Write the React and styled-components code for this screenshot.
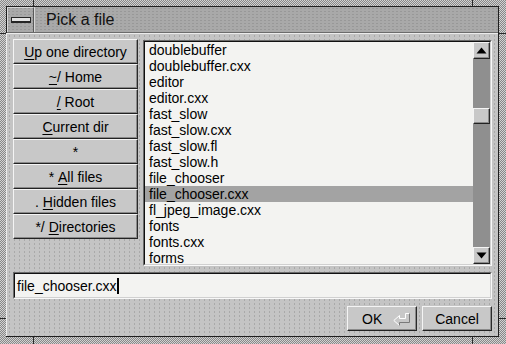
import React from "react";
import styled, { createGlobalStyle } from "styled-components";

const Global = createGlobalStyle`
  html, body { margin: 0; padding: 0; background: #b0b0b0; }
  body { font-family: "Liberation Sans", Arial, Helvetica, sans-serif; }
  #root { width: 506px; height: 344px; }
`;

const dots = `radial-gradient(circle, rgba(120,120,120,0.35) 0.5px, transparent 0.9px)`;

const Frame = styled.div`
  width: 506px;
  height: 344px;
  box-sizing: border-box;
  padding: 6px 7px 7px 6px;
  background:
    linear-gradient(#2a2a2a, #2a2a2a) 33px 0 / 1px 6px no-repeat,
    linear-gradient(#2a2a2a, #2a2a2a) 33px 337px / 1px 7px no-repeat,
    linear-gradient(#2a2a2a, #2a2a2a) 472px 0 / 1px 6px no-repeat,
    linear-gradient(#2a2a2a, #2a2a2a) 472px 337px / 1px 7px no-repeat,
    linear-gradient(#2a2a2a, #2a2a2a) 0 33px / 6px 1px no-repeat,
    linear-gradient(#2a2a2a, #2a2a2a) 499px 33px / 7px 1px no-repeat,
    linear-gradient(#2a2a2a, #2a2a2a) 0 318px / 6px 1px no-repeat,
    linear-gradient(#2a2a2a, #2a2a2a) 499px 318px / 7px 1px no-repeat,
    repeating-conic-gradient(#888888 0% 25%, #d2d2d2 0% 50%) 0 0 / 2px 2px;
`;

const Win = styled.div`
  height: 100%;
  box-sizing: border-box;
  border: 1px solid #1e1e1e;
  display: flex;
  flex-direction: column;
  background-color: #c4c4c4;
`;

const TitleBar = styled.div`
  height: 26px;
  flex: none;
  box-sizing: border-box;
  display: flex;
  align-items: stretch;
  background-color: #a9a9a9;
  background-image: ${dots};
  background-size: 4px 3px;
  border-bottom: 1px solid #6c6c6c;
`;

const MenuBox = styled.div`
  width: 27px;
  box-sizing: border-box;
  display: flex;
  align-items: center;
  justify-content: center;
  border-top: 1px solid #d8d8d8;
  border-left: 1px solid #d8d8d8;
  border-right: 1px solid #5a5a5a;
  box-shadow: 1px 0 0 #d8d8d8;
`;

const MenuBar = styled.div`
  width: 20px;
  height: 6px;
  box-sizing: border-box;
  border: 1px solid #262626;
  border-bottom-width: 2px;
  background: #e4e4e4;
  margin-top: -1px;
`;

const TitleText = styled.div`
  font-size: 16px;
  line-height: 24px;
  color: #111;
  padding-left: 12px;
  display: flex;
  align-items: center;
`;

const Body = styled.div`
  flex: 1;
  display: flex;
  flex-direction: column;
  padding: 5px 6px 5px 6px;
  border-top: 1px solid #ececec;
  border-left: 1px solid #ececec;
  margin-left: -1px;
  background-color: #c4c4c4;
  background-image: ${dots};
  background-size: 5px 4px;
`;

const TopRow = styled.div`
  display: flex;
  gap: 5px;
  height: 227px;
`;

const SideColumn = styled.div`
  width: 125px;
  display: flex;
  flex-direction: column;
`;

const raised = `
  box-sizing: border-box;
  border: 1px solid;
  border-color: #f4f4f4 #2a2a2a #222 #f4f4f4;
  box-shadow: inset -1px -1px 0 #8a8a8a;
  background-color: #c8c8c8;
`;

const SideButton = styled.div`
  ${raised}
  height: 25px;
  font-size: 14px;
  color: #000;
  display: flex;
  align-items: center;
  justify-content: center;
  white-space: pre;
  u { text-underline-offset: 2px; }
`;

const ListOuter = styled.div`
  flex: 1;
  box-sizing: border-box;
  border: 1px solid;
  border-color: #6a6a6a #f8f8f8 #f8f8f8 #6a6a6a;
  display: flex;
  margin-top: 1px;
`;

const ListInner = styled.div`
  flex: 1;
  border: 1px solid;
  border-color: #111 #d0d0d0 #d0d0d0 #111;
  display: flex;
  overflow: hidden;
`;

const Items = styled.div`
  flex: 1;
  background-color: #f3f3f1;
  overflow: hidden;
`;

const Row = styled.div`
  height: 16px;
  line-height: 16px;
  font-size: 14px;
  padding-left: 4px;
  color: #000;
  white-space: pre;
  background: ${(p) => (p.$selected ? "#a3a3a3" : "transparent")};
`;

const ScrollBar = styled.div`
  width: 17px;
  display: flex;
  flex-direction: column;
  background: #8f8f8f;
`;

const ScrollBtn = styled.div`
  ${raised}
  height: 17px;
  flex: none;
  display: flex;
  align-items: center;
  justify-content: center;
`;

const Track = styled.div`
  flex: 1;
  display: flex;
  flex-direction: column;
`;

const Thumb = styled.div`
  ${raised}
  height: 16px;
`;

const InputField = styled.div`
  margin-top: 6px;
  height: 27px;
  box-sizing: border-box;
  border: 1px solid;
  border-color: #6a6a6a #f8f8f8 #f8f8f8 #6a6a6a;
  display: flex;
`;

const InputInner = styled.div`
  flex: 1;
  border: 1px solid;
  border-color: #111 #d0d0d0 #d0d0d0 #111;
  background: #f3f3f1;
  display: flex;
  align-items: center;
  padding-left: 2px;
  font-size: 14px;
  color: #000;
`;

const Caret = styled.span`
  display: inline-block;
  width: 2px;
  height: 16px;
  background: #000;
`;

const ButtonRow = styled.div`
  margin-top: 7px;
  display: flex;
  justify-content: flex-end;
  gap: 5px;
`;

const ActionButton = styled.div`
  ${raised}
  width: 70px;
  height: 25px;
  font-size: 14px;
  color: #000;
  display: flex;
  align-items: center;
  justify-content: ${(p) => (p.$left ? "flex-start" : "center")};
  padding-left: ${(p) => (p.$left ? "14px" : "0")};
  gap: 11px;
`;

const Up = () => (
  <svg width="11" height="7" viewBox="0 0 11 7">
    <polygon points="5.5,0.5 10.5,6.5 0.5,6.5" fill="#000" />
  </svg>
);
const Down = () => (
  <svg width="11" height="7" viewBox="0 0 11 7">
    <polygon points="0.5,0.5 10.5,0.5 5.5,6.5" fill="#000" />
  </svg>
);

const ReturnArrow = () => (
  <svg width="18" height="14" viewBox="0 0 18 14">
    <polyline
      points="6.5,13.5 0.8,8.5 6.5,3.5 6.5,6.5 12.5,6.5 12.5,1.5 16.5,1.5"
      fill="none"
      stroke="#ffffff"
      strokeWidth="1"
    />
    <polyline
      points="16.5,1.5 16.5,10.5 6.5,10.5 6.5,13.5"
      fill="none"
      stroke="#7a7a7a"
      strokeWidth="1"
    />
  </svg>
);

const files = [
  "doublebuffer",
  "doublebuffer.cxx",
  "editor",
  "editor.cxx",
  "fast_slow",
  "fast_slow.cxx",
  "fast_slow.fl",
  "fast_slow.h",
  "file_chooser",
  "file_chooser.cxx",
  "fl_jpeg_image.cxx",
  "fonts",
  "fonts.cxx",
  "forms",
];

const side = [
  [<u key="u">U</u>, "p one directory"],
  [<u key="u">~</u>, "/ Home"],
  [<u key="u">/</u>, " Root"],
  [<u key="u">C</u>, "urrent dir"],
  ["*"],
  ["* ", <u key="u">A</u>, "ll files"],
  [". ", <u key="u">H</u>, "idden files"],
  ["*/ ", <u key="u">D</u>, "irectories"],
];

export default function App() {
  return (
    <>
      <Global />
      <Frame>
        <Win>
          <TitleBar>
            <MenuBox>
              <MenuBar />
            </MenuBox>
            <TitleText>Pick a file</TitleText>
          </TitleBar>
          <Body>
            <TopRow>
              <SideColumn>
                {side.map((parts, i) => (
                  <SideButton key={i}>{parts}</SideButton>
                ))}
              </SideColumn>
              <ListOuter>
                <ListInner>
                  <Items>
                    {files.map((f) => (
                      <Row key={f} $selected={f === "file_chooser.cxx"}>
                        {f}
                      </Row>
                    ))}
                  </Items>
                  <ScrollBar>
                    <ScrollBtn>
                      <Up />
                    </ScrollBtn>
                    <Track>
                      <Thumb style={{ marginTop: 49 }} />
                    </Track>
                    <ScrollBtn>
                      <Down />
                    </ScrollBtn>
                  </ScrollBar>
                </ListInner>
              </ListOuter>
            </TopRow>
            <InputField>
              <InputInner>
                file_chooser.cxx
                <Caret />
              </InputInner>
            </InputField>
            <ButtonRow>
              <ActionButton $left>
                <span>OK</span>
                <ReturnArrow />
              </ActionButton>
              <ActionButton>Cancel</ActionButton>
            </ButtonRow>
          </Body>
        </Win>
      </Frame>
    </>
  );
}
